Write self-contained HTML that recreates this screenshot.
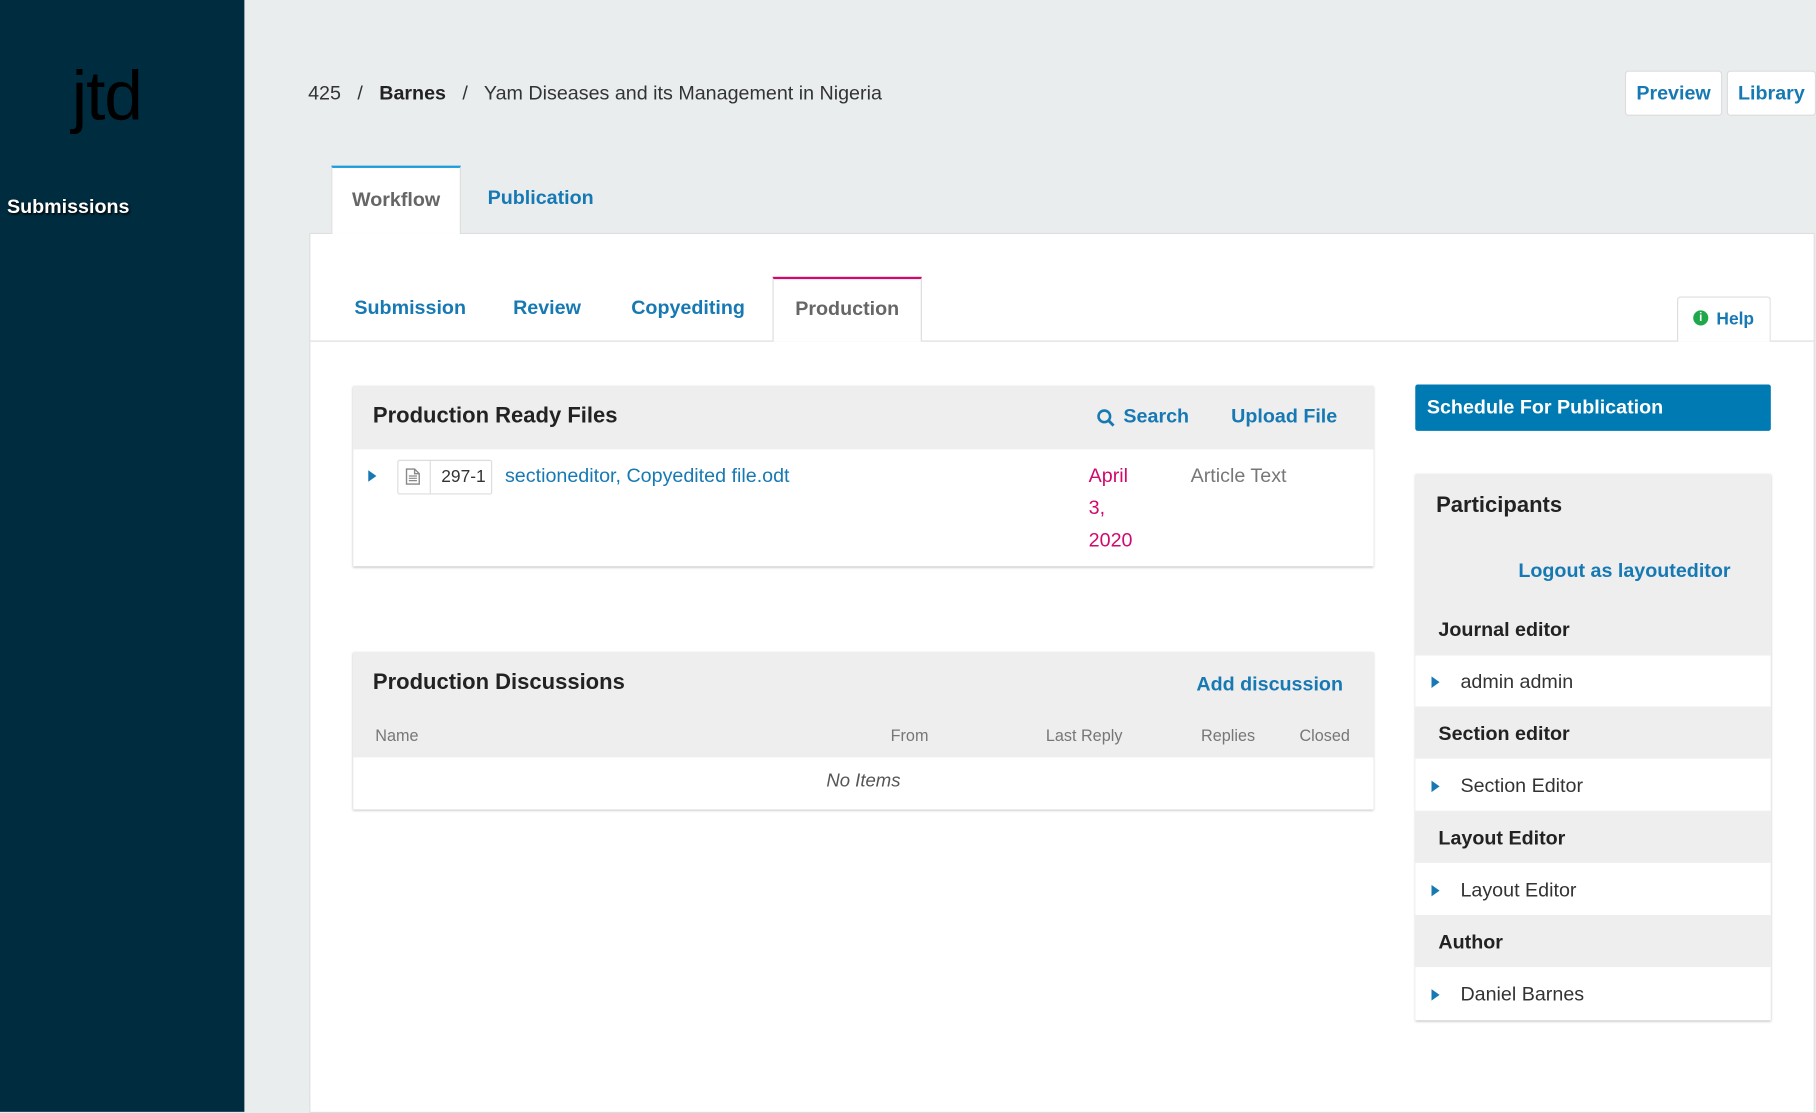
<!DOCTYPE html>
<html><head><meta charset="utf-8"><style>
*{box-sizing:border-box;margin:0;padding:0}
html,body{width:1816px;height:1076px;overflow:hidden;background:#e9edee}
#w{position:absolute;left:0;top:0;width:1568px;height:940px;transform:scale(1.15816);transform-origin:0 0;font-family:"Liberation Sans",sans-serif;color:#222;background:#e9edee}
.a{position:absolute}
.b{font-weight:bold}
.lnk{color:#1779b3;font-weight:bold}
.hd{background:#eeeeee}
.tri{width:0;height:0;border-left:7px solid #1779b3;border-top:5px solid transparent;border-bottom:5px solid transparent}
</style></head><body><div id="w">
<div class="a" style="left:0;top:0;width:211px;height:960px;background:#002c40"></div>
<div class="a" style="left:62px;top:48px;font-size:60px;color:#000;letter-spacing:-1px;font-family:'Liberation Sans',sans-serif">jtd</div>
<div class="a b" style="left:6px;top:169px;font-size:17px;color:#fff;text-shadow:1px 1px 2px #000">Submissions</div>

<div class="a" style="left:266px;top:71px;font-size:17px;color:#333">425 &nbsp;&nbsp;/&nbsp;&nbsp; <b style="color:#222">Barnes</b> &nbsp;&nbsp;/&nbsp;&nbsp; Yam Diseases and its Management in Nigeria</div>
<div class="a lnk" style="left:1403px;top:61px;width:84px;height:39px;background:#fff;border:1px solid #ddd;border-radius:3px;font-size:17px;text-align:center;line-height:37px">Preview</div>
<div class="a lnk" style="left:1491px;top:61px;width:77px;height:39px;background:#fff;border:1px solid #ddd;border-radius:3px;font-size:17px;text-align:center;line-height:37px">Library</div>

<div class="a" style="left:267px;top:201px;width:1300px;height:760px;background:#fff;border:1px solid #ddd"></div>
<div class="a b" style="left:286px;top:143px;width:112px;height:59px;background:#fff;border-top:2px solid #1e9ddb;border-left:1px solid #ddd;border-right:1px solid #ddd;font-size:17px;color:#666;text-align:center;line-height:55px">Workflow</div>
<div class="a lnk" style="left:421px;top:161px;font-size:17px">Publication</div>

<div class="a" style="left:268px;top:294px;width:1298px;height:1px;background:#ddd"></div>
<div class="a lnk" style="left:306px;top:256px;font-size:17px">Submission</div>
<div class="a lnk" style="left:443px;top:256px;font-size:17px">Review</div>
<div class="a lnk" style="left:545px;top:256px;font-size:17px">Copyediting</div>
<div class="a b" style="left:667px;top:239px;width:129px;height:56px;background:#fff;border-top:2px solid #d00a6c;border-left:1px solid #ddd;border-right:1px solid #ddd;font-size:17px;color:#666;text-align:center;line-height:52px">Production</div>
<div class="a lnk" style="left:1448px;top:256px;width:81px;height:39px;background:#fff;border:1px solid #ddd;border-bottom:none;border-radius:3px 3px 0 0;font-size:15px;line-height:37px;padding-left:33px">Help</div>
<div class="a" style="left:1462px;top:268px;width:13px;height:13px;border-radius:50%;background:#1fa84a;color:#fff;font-size:10px;font-weight:bold;text-align:center;line-height:13px">i</div>

<div class="a" style="left:305px;top:333px;width:881px;height:156px;background:#fff;box-shadow:0 1px 2px rgba(0,0,0,.25)"></div>
<div class="a hd" style="left:305px;top:333px;width:881px;height:55px"></div>
<div class="a b" style="left:322px;top:349px;font-size:19px">Production Ready Files</div>
<svg class="a" style="left:947px;top:353px" width="16" height="16" viewBox="0 0 16 16"><circle cx="6.5" cy="6.5" r="5" fill="none" stroke="#1779b3" stroke-width="2.2"/><path d="M10 10l4.5 4.5" stroke="#1779b3" stroke-width="2.5"/></svg>
<div class="a lnk" style="left:970px;top:350px;font-size:17px">Search</div>
<div class="a lnk" style="left:1063px;top:350px;font-size:17px">Upload File</div>
<div class="tri a" style="left:318px;top:406px"></div>
<div class="a" style="left:343px;top:397px;width:82px;height:30px;border:1px solid #ddd;border-radius:2px"></div>
<div class="a" style="left:371px;top:398px;width:1px;height:28px;background:#ddd"></div>
<svg class="a" style="left:350px;top:404px" width="13" height="15" viewBox="0 0 13 15"><path d="M1 1h7l4 4v9H1z M8 1v4h4" fill="none" stroke="#888" stroke-width="1.2"/><path d="M3 7h7M3 9h7M3 11h7" stroke="#888"/></svg>
<div class="a" style="left:381px;top:403px;font-size:15px;color:#333">297-1</div>
<div class="a" style="left:436px;top:401px;font-size:17px;color:#1779b3">sectioneditor, Copyedited file.odt</div>
<div class="a" style="left:940px;top:397px;font-size:17px;color:#d00a6c;line-height:28px">April<br>3,<br>2020</div>
<div class="a" style="left:1028px;top:401px;font-size:17px;color:#777">Article Text</div>

<div class="a" style="left:305px;top:563px;width:881px;height:136px;background:#fff;box-shadow:0 1px 2px rgba(0,0,0,.25)"></div>
<div class="a hd" style="left:305px;top:563px;width:881px;height:91px"></div>
<div class="a b" style="left:322px;top:579px;font-size:19px">Production Discussions</div>
<div class="a lnk" style="left:1033px;top:581px;font-size:17px">Add discussion</div>
<div class="a" style="left:324px;top:627px;font-size:14px;color:#777">Name</div>
<div class="a" style="left:769px;top:627px;font-size:14px;color:#777">From</div>
<div class="a" style="left:903px;top:627px;font-size:14px;color:#777">Last Reply</div>
<div class="a" style="left:1037px;top:627px;font-size:14px;color:#777">Replies</div>
<div class="a" style="left:1122px;top:627px;font-size:14px;color:#777">Closed</div>
<div class="a" style="left:305px;top:666px;width:881px;text-align:center;font-size:16px;font-style:italic;color:#555">No Items</div>

<div class="a b" style="left:1222px;top:332px;width:307px;height:40px;background:#007ab2;border-radius:2px;color:#fff;font-size:17px;line-height:40px;padding-left:10px">Schedule For Publication</div>
<div class="a" style="left:1222px;top:409px;width:307px;height:472px;background:#fff;box-shadow:0 1px 2px rgba(0,0,0,.25)"></div>
<div class="a hd" style="left:1222px;top:409px;width:307px;height:157px"></div>
<div class="a b" style="left:1240px;top:426px;font-size:19px">Participants</div>
<div class="a lnk" style="left:1311px;top:483px;font-size:17px">Logout as layouteditor</div>
<div class="a hd" style="left:1222px;top:610px;width:307px;height:45px"></div>
<div class="a hd" style="left:1222px;top:700px;width:307px;height:45px"></div>
<div class="a hd" style="left:1222px;top:790px;width:307px;height:45px"></div>
<div class="a b" style="left:1242px;top:534px;font-size:17px">Journal editor</div>
<div class="a b" style="left:1242px;top:624px;font-size:17px">Section editor</div>
<div class="a b" style="left:1242px;top:714px;font-size:17px">Layout Editor</div>
<div class="a b" style="left:1242px;top:804px;font-size:17px">Author</div>
<div class="tri a" style="left:1236px;top:584px"></div>
<div class="tri a" style="left:1236px;top:674px"></div>
<div class="tri a" style="left:1236px;top:764px"></div>
<div class="tri a" style="left:1236px;top:854px"></div>
<div class="a" style="left:1261px;top:579px;font-size:17px;color:#333">admin admin</div>
<div class="a" style="left:1261px;top:669px;font-size:17px;color:#333">Section Editor</div>
<div class="a" style="left:1261px;top:759px;font-size:17px;color:#333">Layout Editor</div>
<div class="a" style="left:1261px;top:849px;font-size:17px;color:#333">Daniel Barnes</div>
</div></body></html>
